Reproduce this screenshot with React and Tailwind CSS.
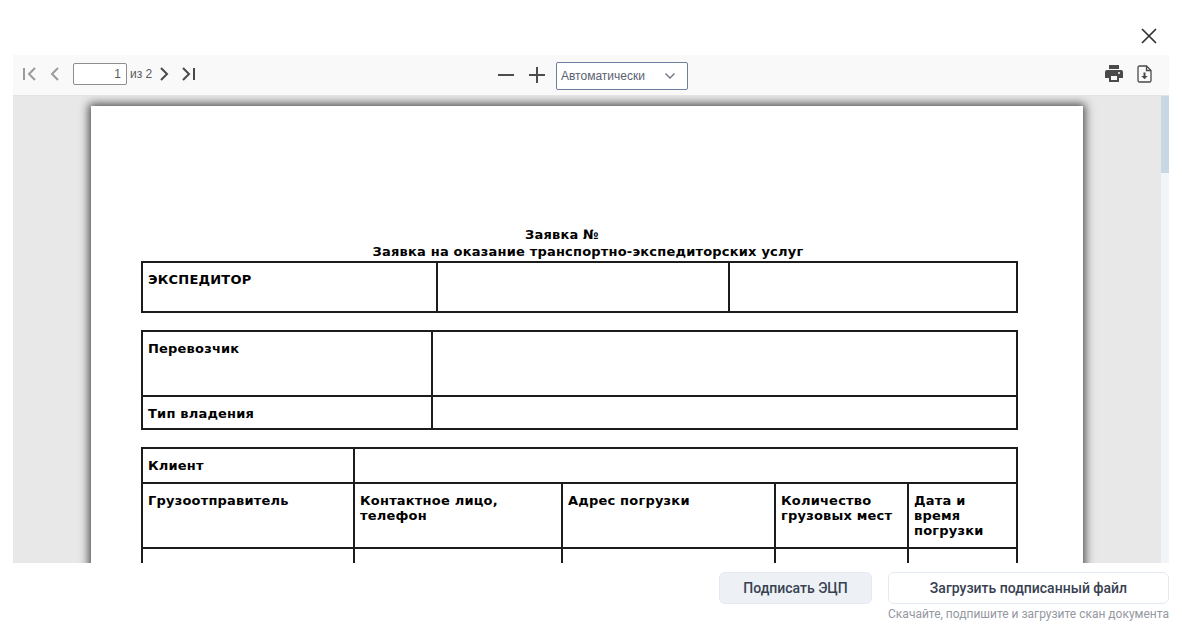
import React from "react";

const cell = "border-2 border-[#1c1c1c] align-top px-[5px] font-bold";

function FirstIcon() {
  return (
    <svg width="16" height="16" viewBox="0 0 16 16" fill="none" stroke="#9b9b9b" strokeWidth="2">
      <path d="M2 2v12" />
      <path d="M13 2L7 8l6 6" />
    </svg>
  );
}
function PrevIcon() {
  return (
    <svg width="16" height="16" viewBox="0 0 16 16" fill="none" stroke="#9b9b9b" strokeWidth="2">
      <path d="M11 2L5 8l6 6" />
    </svg>
  );
}
function NextIcon() {
  return (
    <svg width="16" height="16" viewBox="0 0 16 16" fill="none" stroke="#4a4a4a" strokeWidth="2">
      <path d="M5 2l6 6-6 6" />
    </svg>
  );
}
function LastIcon() {
  return (
    <svg width="16" height="16" viewBox="0 0 16 16" fill="none" stroke="#4a4a4a" strokeWidth="2">
      <path d="M2 2l6 6-6 6" />
      <path d="M13 2v12" />
    </svg>
  );
}
function PrintIcon() {
  return (
    <svg width="20" height="20" viewBox="0 0 20 20" fill="#4a4a4a">
      <path d="M5 1h10v4H5z" />
      <path fillRule="evenodd" d="M3 6h14a2 2 0 0 1 2 2v6h-4v4H5v-4H1V8a2 2 0 0 1 2-2zm4 6v4h6v-4H7zm8-4a1 1 0 1 0 0 2 1 1 0 0 0 0-2z" />
    </svg>
  );
}
function SaveIcon() {
  return (
    <svg width="16" height="18" viewBox="0 0 16 18" fill="none">
      <path d="M2.500 1h7L14 5.500V15.500a1.500 1.500 0 0 1-1.500 1.500h-10A1.500 1.500 0 0 1 1 15.500v-13A1.500 1.500 0 0 1 2.500 1z" stroke="#4a4a4a" strokeWidth="1.300" />
      <path d="M9.500 1v4.500H14" stroke="#4a4a4a" strokeWidth="1.300" />
      <path d="M6.500 7.500h2V11h2.200L7.500 14.300 4.300 11h2.200z" fill="#4a4a4a" />
    </svg>
  );
}

function Toolbar() {
  return (
    <div className="h-[41px] shrink-0 bg-[#f9f9f9] border-b border-[#e3e3e5] flex items-center pl-[8px] pr-[16px] font-['Liberation_Sans',sans-serif] text-[12px] text-[#5a5a5a]">
      <div className="flex items-center w-[470px] pb-[2px]">
        <span className="ml-[1px] w-[25px] flex"><FirstIcon /></span>
        <span className="w-[26px] flex"><PrevIcon /></span>
        <div className="w-[54px] h-[22px] border border-[#8d8d92] rounded-[2px] bg-white text-right pr-[5px] leading-[20px] text-[12px] text-[#5a5a5a]">1</div>
        <span className="ml-[3px] text-[#5a5a5a]">из 2</span>
        <span className="ml-[4px] w-[25px] flex"><NextIcon /></span>
        <span className="flex"><LastIcon /></span>
      </div>
      <div className="flex items-center ml-[7px]">
        <svg width="16" height="16" viewBox="0 0 16 16" stroke="#4d4d4d" strokeWidth="2">
          <path d="M0 8h16" />
        </svg>
        <svg className="ml-[15px]" width="16" height="16" viewBox="0 0 16 16" stroke="#4d4d4d" strokeWidth="2">
          <path d="M0 8h16M8 0v16" />
        </svg>
        <div className="ml-[11px] mt-[2px] w-[132px] h-[28px] border border-[#6d7f9c] rounded-[2px] bg-white flex items-center justify-between pl-[4px] pr-[12px] text-[12px] text-[#5a6070]">
          <span>Автоматически</span>
          <svg width="10" height="6" viewBox="0 0 10 6" fill="none" stroke="#6b7280" strokeWidth="1.300">
            <path d="M0.500 0.500L5 5l4.500-4.500" />
          </svg>
        </div>
      </div>
      <div className="ml-auto flex items-center gap-[13px] pb-[2px]">
        <PrintIcon />
        <SaveIcon />
      </div>
    </div>
  );
}

function PageContent() {
  return (
    <div className="w-[992px] h-[600px] shrink-0 bg-white ml-[78px] mt-[10px] shadow-[0_0_9px_2px_rgba(40,40,40,0.85)] pt-[120px] px-[50px] font-['DejaVu_Sans',sans-serif] text-[13px] leading-[15px] tracking-[0.2px] text-black">
      <div className="text-center font-bold leading-[17px] pl-[2px]">
        <div className="pr-[52px]">Заявка №</div>
        <div>Заявка на оказание транспортно-экспедиторских услуг</div>
      </div>
      <table className="w-[877px] table-fixed border-collapse mt-[1px]">
        <colgroup>
          <col className="w-[295px]" />
          <col className="w-[292px]" />
          <col />
        </colgroup>
        <tbody>
          <tr className="h-[50px]">
            <td className={cell + " pt-[9px]"}>ЭКСПЕДИТОР</td>
            <td className={cell}></td>
            <td className={cell}></td>
          </tr>
        </tbody>
      </table>
      <table className="w-[877px] table-fixed border-collapse mt-[17px]">
        <colgroup>
          <col className="w-[290px]" />
          <col />
        </colgroup>
        <tbody>
          <tr className="h-[65px]">
            <td className={cell + " pt-[9px]"}>Перевозчик</td>
            <td className={cell}></td>
          </tr>
          <tr className="h-[33px]">
            <td className={cell + " pt-[9px]"}>Тип владения</td>
            <td className={cell}></td>
          </tr>
        </tbody>
      </table>
      <table className="w-[877px] table-fixed border-collapse mt-[17px]">
        <colgroup>
          <col className="w-[212px]" />
          <col className="w-[208px]" />
          <col className="w-[213px]" />
          <col className="w-[133px]" />
          <col />
        </colgroup>
        <tbody>
          <tr className="h-[35px]">
            <td className={cell + " pt-[9px]"}>Клиент</td>
            <td className={cell} colSpan={4}></td>
          </tr>
          <tr className="h-[65px]">
            <td className={cell + " pt-[9px]"}>Грузоотправитель</td>
            <td className={cell + " pt-[9px]"}>Контактное лицо, телефон</td>
            <td className={cell + " pt-[9px]"}>Адрес погрузки</td>
            <td className={cell + " pt-[9px]"}>Количество грузовых мест</td>
            <td className={cell + " pt-[9px]"}>Дата и время погрузки</td>
          </tr>
          <tr className="h-[40px]">
            <td className={cell}></td>
            <td className={cell}></td>
            <td className={cell}></td>
            <td className={cell}></td>
            <td className={cell}></td>
          </tr>
        </tbody>
      </table>
    </div>
  );
}

export default function App() {
  return (
    <div className="w-[1182px] h-[626px] bg-white overflow-hidden flex flex-col px-[13px]">
      <div className="h-[55px] shrink-0 flex items-center justify-end pr-[12px] pt-[16px]">
        <svg width="16" height="16" viewBox="0 0 16 16" fill="none" stroke="#333" strokeWidth="1.700">
          <path d="M1 1l14 14M15 1L1 15" />
        </svg>
      </div>
      <Toolbar />
      <div className="h-[467px] shrink-0 bg-[#e8e8e9] flex overflow-hidden">
        <div className="flex-1 min-w-0 overflow-hidden">
          <PageContent />
        </div>
        <div className="w-[8px] shrink-0 bg-[#f1f4f8] flex flex-col">
          <div className="h-[77px] bg-[#c9d6e3]" />
        </div>
      </div>
      <div className="flex justify-end gap-[16px] mt-[9px] font-['Roboto',sans-serif]">
        <button className="w-[153px] h-[32px] rounded-[6px] bg-[#edf1f6] border border-[#e3e9f1] text-[14px] font-medium text-[#374151]">
          Подписать ЭЦП
        </button>
        <div className="w-[281px] flex flex-col">
          <button className="h-[32px] rounded-[6px] bg-white border border-[#e3e9f1] text-[14px] font-medium text-[#374151]">
            Загрузить подписанный файл
          </button>
          <div className="text-[12px] leading-[14px] mt-[3px] text-[#94989f] text-right whitespace-nowrap">
            Скачайте, подпишите и загрузите скан документа
          </div>
        </div>
      </div>
    </div>
  );
}
